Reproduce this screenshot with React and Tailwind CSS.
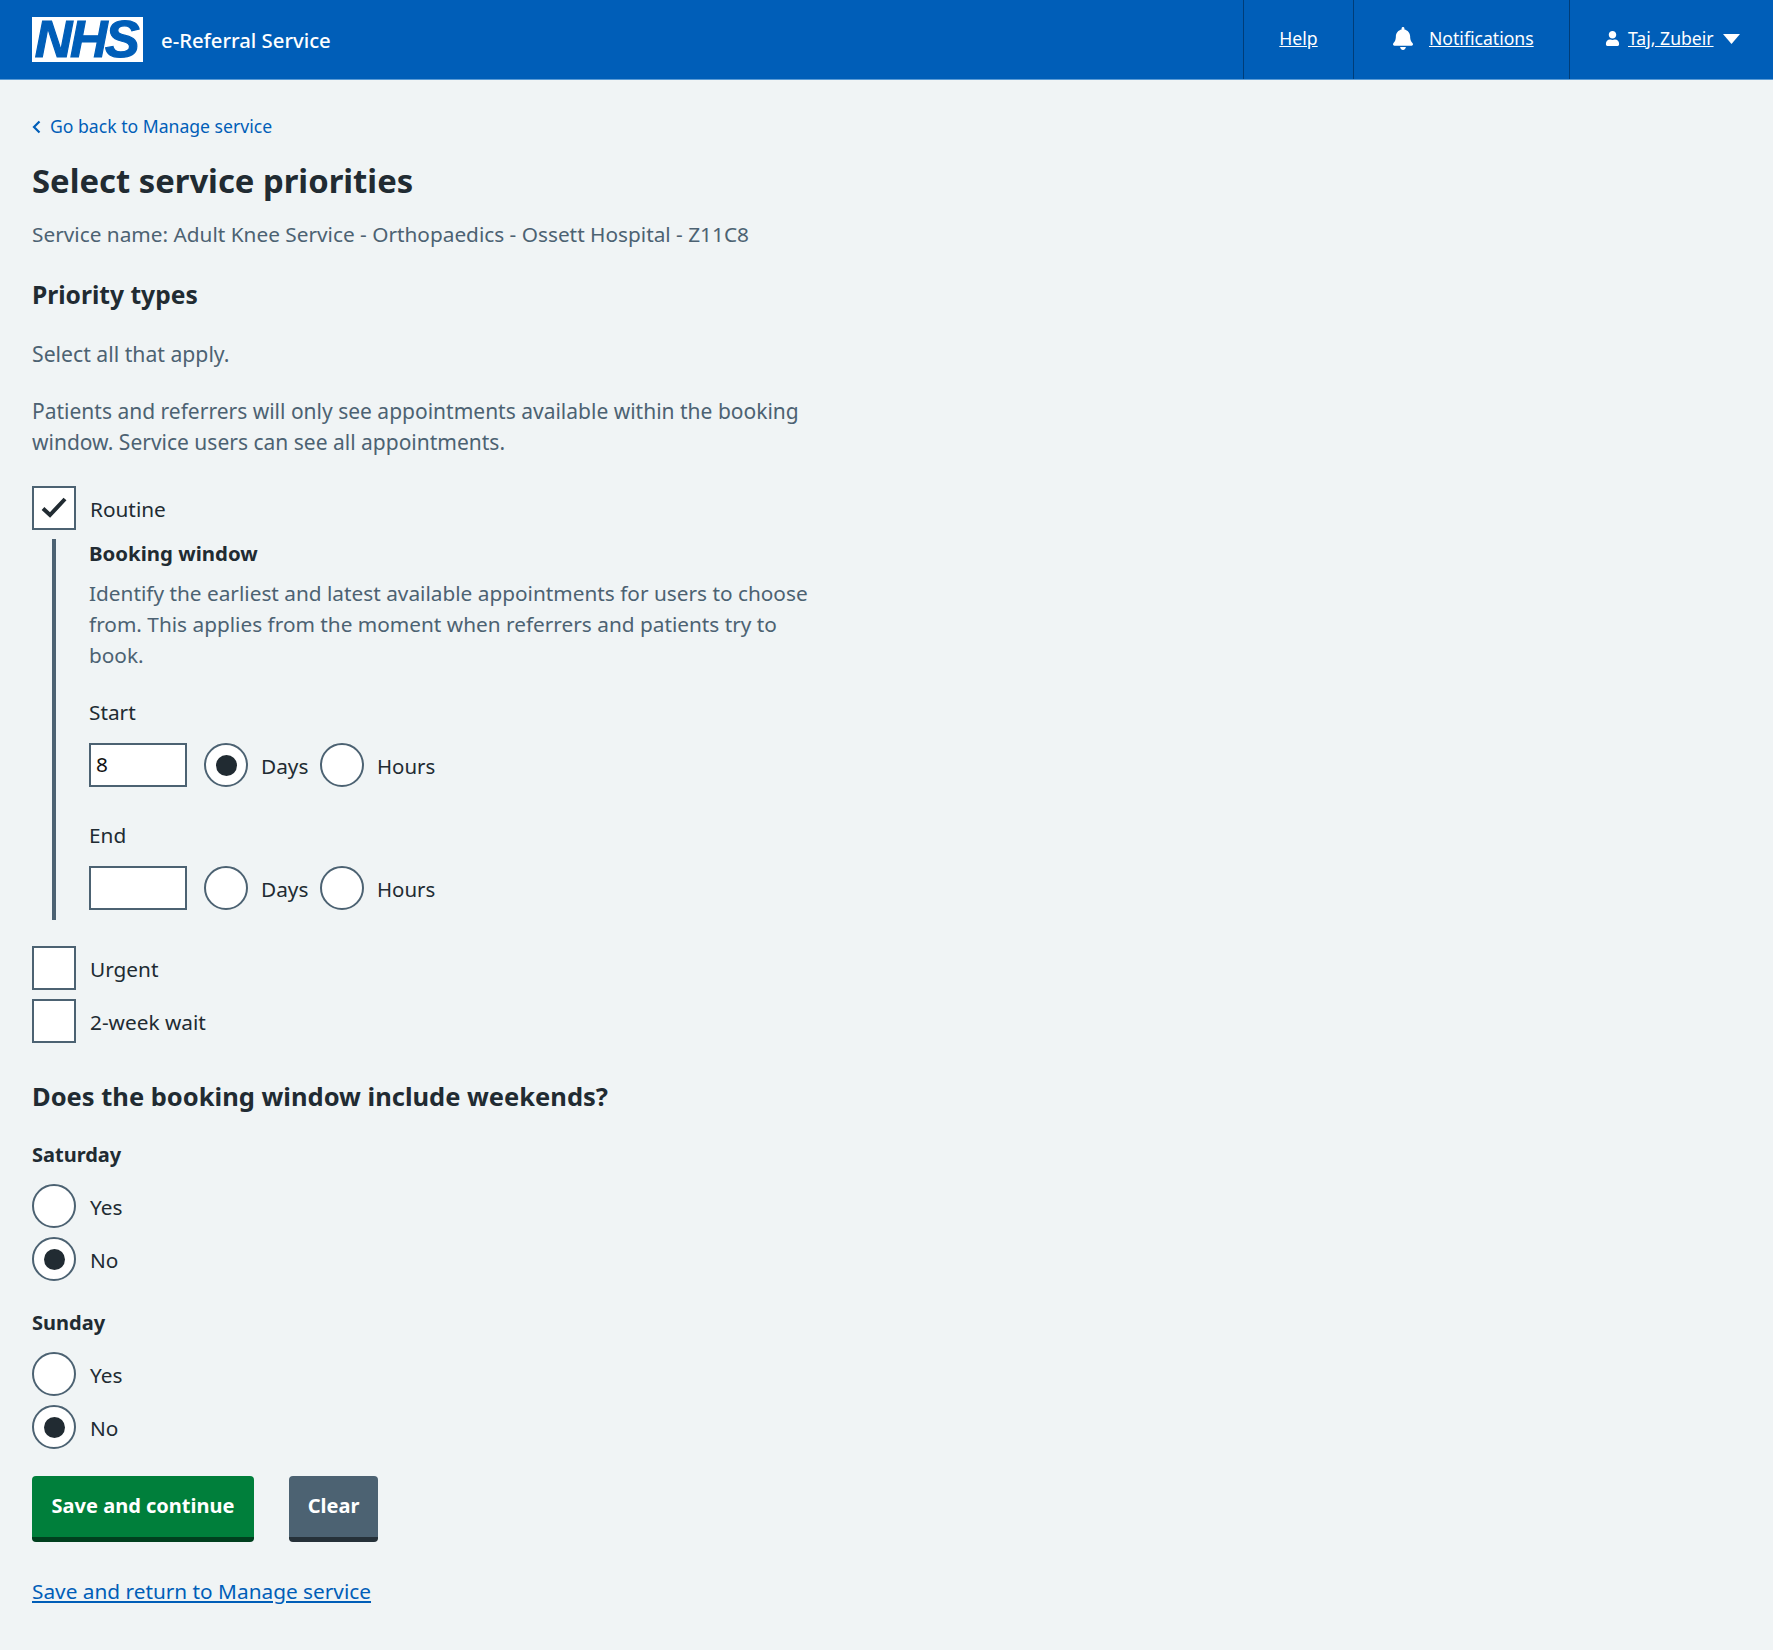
import React from "react";
import { FaBell, FaUser } from "react-icons/fa";

function Radio({ checked }) {
  return (
    <span className="flex h-[44px] w-[44px] shrink-0 items-center justify-center rounded-full border-2 border-[#4c6272] bg-white">
      {checked && <span className="h-[21px] w-[21px] rounded-full bg-[#212b32]" />}
    </span>
  );
}

function Check({ checked }) {
  return (
    <span className="flex h-[44px] w-[44px] shrink-0 items-center justify-center border-2 border-[#4c6272] bg-white">
      {checked && (
        <svg width="26" height="22" viewBox="0 0 26 22" fill="none">
          <path d="M2 11.5 L9 18 L24 2" stroke="#212b32" strokeWidth="4" />
        </svg>
      )}
    </span>
  );
}

function CheckRow({ label, checked }) {
  return (
    <div className="flex h-[44px] items-center gap-[14px]">
      <Check checked={checked} />
      <span className="pt-[2px] text-[#212b32]">{label}</span>
    </div>
  );
}

function RadioRow({ label, checked }) {
  return (
    <div className="flex h-[44px] items-center gap-[14px]">
      <Radio checked={checked} />
      <span className="pt-[2px] text-[#212b32]">{label}</span>
    </div>
  );
}

function WindowRow({ label, value, days }) {
  return (
    <div>
      <div className="text-[#212b32]">{label}</div>
      <div className="mt-[15px] flex items-center">
        <div className="flex h-[44px] w-[98px] items-center border-2 border-[#4c6272] bg-white pb-[2px] pl-[5px] text-[#111]">
          {value}
        </div>
        <div className="ml-[17px] flex h-[44px] items-center gap-[13px]">
          <Radio checked={days} />
          <span className="w-[47px] pt-[2px] text-[#212b32]">Days</span>
        </div>
        <div className="ml-[12px] flex h-[44px] items-center gap-[13px]">
          <Radio />
          <span className="pt-[2px] text-[20.4px] text-[#212b32]">Hours</span>
        </div>
      </div>
    </div>
  );
}

export default function App() {
  return (
    <div className="min-h-[1650px] bg-[#f0f4f5] font-['Noto_Sans',sans-serif] text-[20.8px] leading-[31px] text-[#4c6272]">
      <header className="flex h-[80px] items-stretch border-b border-[#5b9bd5] bg-[#005eb8] text-white">
        <div className="flex flex-1 items-center pb-[1px] pl-[32px]">
          <div className="flex h-[45px] w-[111px] items-center justify-center bg-white pr-[3px] font-['Liberation_Sans',sans-serif] text-[52px] font-bold italic leading-[45px] tracking-[-2.5px] text-[#005eb8] [-webkit-text-stroke:1.2px_#005eb8]">
            NHS
          </div>
          <span className="ml-[18px] pt-[3px] text-[20.3px] font-medium">e-Referral Service</span>
        </div>
        <a className="flex w-[110px] items-center justify-center border-l border-[#003d78] pb-[3px] text-[17.6px] underline">Help</a>
        <div className="flex w-[216px] items-center gap-[16px] border-l border-[#003d78] pb-[3px] pl-[39px] text-[17.6px]">
          <FaBell className="h-[23px] w-[20px]" />
          <a className="underline">Notifications</a>
        </div>
        <div className="flex w-[204px] items-center border-l border-[#003d78] pb-[3px] pl-[35px] text-[17.6px]">
          <FaUser className="mr-[8px] h-[15px] w-[15px]" />
          <a className="underline">Taj, Zubeir</a>
          <svg className="ml-[9px] mt-[2px]" width="17" height="10" viewBox="0 0 17 10"><path d="M0 0 H17 L8.5 10 Z" fill="#fff" /></svg>
        </div>
      </header>

      <main className="w-[848px] pl-[32px] pt-[31px]">
        <a className="flex h-[31px] items-center text-[17.6px] text-[#005eb8]">
          <svg className="mr-[9px]" width="9" height="14" viewBox="0 0 9 14" fill="none"><path d="M7.5 1.5 L2 7 L7.5 12.5" stroke="#005eb8" strokeWidth="2.2" /></svg>
          Go back to Manage service
        </a>
        <h1 className="mt-[17px] text-[32.8px] font-bold leading-[44px] text-[#212b32]">Select service priorities</h1>
        <p className="mt-[16px]">Service name: Adult Knee Service - Orthopaedics - Ossett Hospital - Z11C8</p>
        <h2 className="mt-[28px] text-[24.6px] font-bold leading-[34px] text-[#212b32]">Priority types</h2>
        <p className="mt-[26px] text-[21.2px]">Select all that apply.</p>
        <p className="mt-[27px] text-[21px]">Patients and referrers will only see appointments available within the booking window. Service users can see all appointments.</p>

        <div className="mt-[28px]">
          <CheckRow label="Routine" checked />
          <div className="ml-[20px] mt-[9px] flex h-[381px] flex-col border-l-4 border-[#4c6272] pl-[33px]">
            <div className="text-[20.4px] font-bold leading-[28px] text-[#212b32]">Booking window</div>
            <p className="mt-[11px] w-[735px]">Identify the earliest and latest available appointments for users to choose from. This applies from the moment when referrers and patients try to book.</p>
            <div className="mt-[26px]">
              <WindowRow label="Start" value="8" days />
            </div>
            <div className="mt-[33px]">
              <WindowRow label="End" />
            </div>
          </div>
          <div className="mt-[26px] flex flex-col gap-[9px]">
            <CheckRow label="Urgent" />
            <CheckRow label="2-week wait" />
          </div>
        </div>

        <h2 className="mt-[35px] text-[25.5px] font-bold leading-[36px] text-[#212b32]">Does the booking window include weekends?</h2>
        <div className="mt-[25px] text-[20px] font-bold text-[#212b32]">Saturday</div>
        <div className="mt-[14px] flex flex-col gap-[9px]">
          <RadioRow label="Yes" />
          <RadioRow label="No" checked />
        </div>
        <div className="mt-[26px] text-[20px] font-bold text-[#212b32]">Sunday</div>
        <div className="mt-[14px] flex flex-col gap-[9px]">
          <RadioRow label="Yes" />
          <RadioRow label="No" checked />
        </div>

        <div className="mt-[27px] flex gap-[35px]">
          <button className="flex h-[66px] w-[222px] items-start justify-center rounded-[4px] border-b-[5px] border-[#00401e] bg-[#007f3b] pt-[14px] text-[20px] font-bold text-white">Save and continue</button>
          <button className="flex h-[66px] w-[89px] items-start justify-center rounded-[4px] border-b-[5px] border-[#263139] bg-[#4c6272] pt-[14px] text-[20px] font-bold text-white">Clear</button>
        </div>
        <a className="mt-[34px] block text-[#005eb8] underline">Save and return to Manage service</a>
      </main>
    </div>
  );
}
